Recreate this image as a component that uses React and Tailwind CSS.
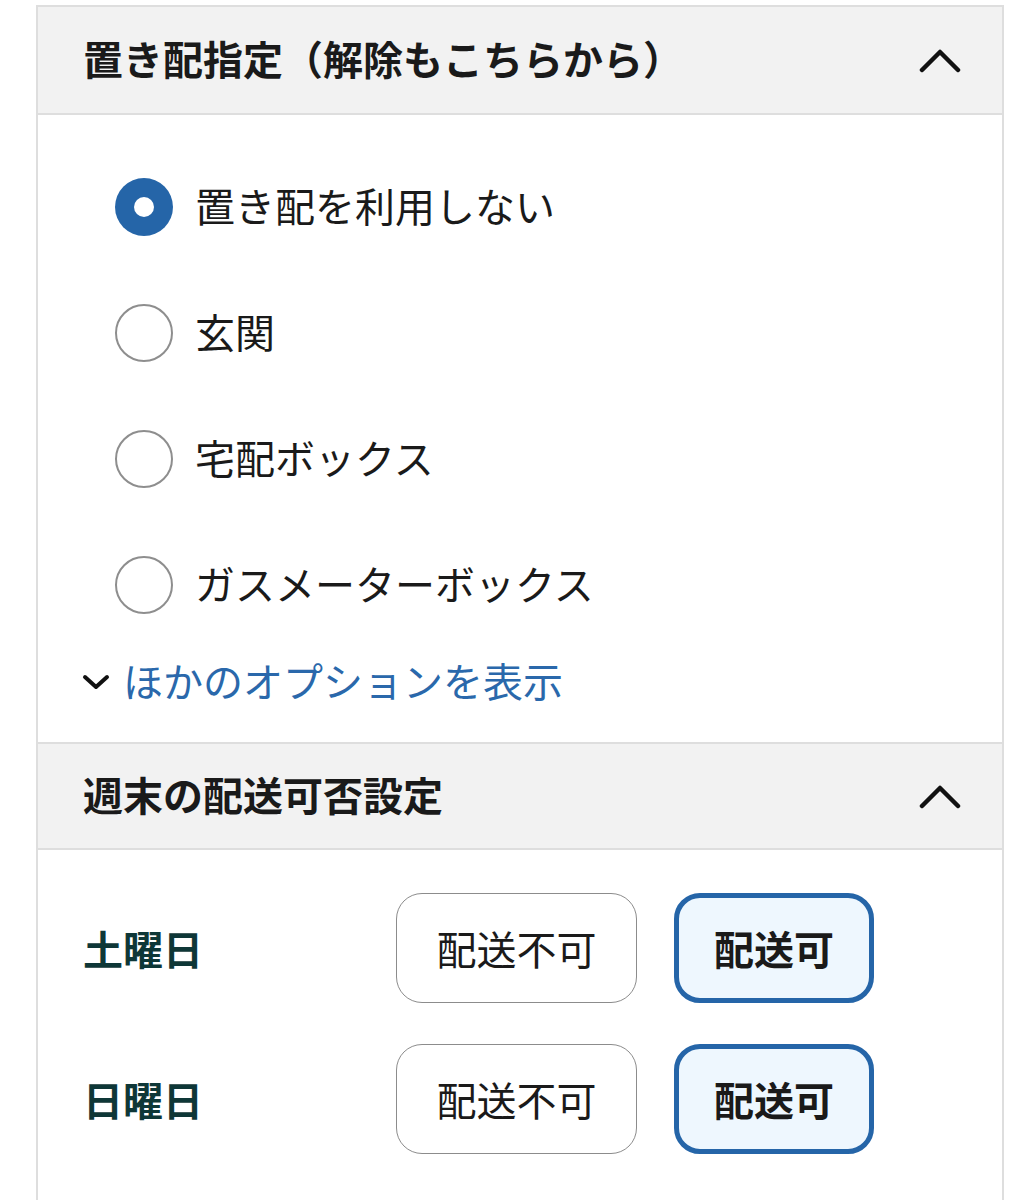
import { useState } from 'react'

const font = { fontFamily: '"Noto Sans CJK JP", "Noto Sans", sans-serif' }

function ChevronUp() {
  return (
    <svg width="42" height="26" viewBox="0 0 42 26" fill="none">
      <path d="M3 23 L21 5 L39 23" stroke="#111" strokeWidth="4.5" strokeLinecap="round" strokeLinejoin="round" />
    </svg>
  )
}

function ChevronDown() {
  return (
    <svg width="28" height="18" viewBox="0 0 28 18" fill="none">
      <path d="M3 4 L14 14 L25 4" stroke="#111" strokeWidth="4" strokeLinecap="round" strokeLinejoin="round" />
    </svg>
  )
}

function SectionHeader({ title, first }) {
  return (
    <div className={`flex h-[108px] items-center justify-between border-b-2 border-[#dedede] bg-[#f2f2f2] pl-[45px] pr-[41px] ${first ? '' : 'border-t-2'}`}>
      <h2 className="-mt-[4px] text-[40px] font-bold leading-none text-[#1a1a1a]">{title}</h2>
      <ChevronUp />
    </div>
  )
}

function Radio({ checked, label, onClick }) {
  return (
    <button onClick={onClick} className="flex h-[58px] items-center gap-[22px] text-left">
      {checked ? (
        <span className="flex h-[58px] w-[58px] items-center justify-center rounded-full bg-[#2565a8]">
          <span className="h-[20px] w-[20px] rounded-full bg-white" />
        </span>
      ) : (
        <span className="h-[58px] w-[58px] rounded-full border-[2px] border-[#8e8e8e] bg-white" />
      )}
      <span className="-mt-[4px] text-[40px] leading-none text-[#1a1a1a]">{label}</span>
    </button>
  )
}

function DayRow({ day, value, onChange }) {
  return (
    <div className="flex items-center">
      <div className="w-[313px] text-[40px] font-bold leading-none text-[#0e3737]">{day}</div>
      <div className="flex gap-[37px]">
        <button
          onClick={() => onChange(false)}
          className={value === false
            ? 'flex h-[110px] w-[241px] items-center justify-center rounded-[26px] border-[5px] border-[#2565a8] bg-[#eef7fe] text-[40px] font-bold text-[#1a1a1a]'
            : 'flex h-[110px] w-[241px] items-center justify-center rounded-[26px] border-[1.5px] border-[#8c8c8c] bg-white text-[40px] text-[#1a1a1a]'}
        >
          配送不可
        </button>
        <button
          onClick={() => onChange(true)}
          className={value === true
            ? 'flex h-[110px] w-[200px] items-center justify-center rounded-[26px] border-[5px] border-[#2565a8] bg-[#eef7fe] text-[40px] font-bold text-[#1a1a1a]'
            : 'flex h-[110px] w-[200px] items-center justify-center rounded-[26px] border-[1.5px] border-[#8c8c8c] bg-white text-[40px] text-[#1a1a1a]'}
        >
          配送可
        </button>
      </div>
    </div>
  )
}

export default function App() {
  const [place, setPlace] = useState(0)
  const [sat, setSat] = useState(true)
  const [sun, setSun] = useState(true)
  const options = ['置き配を利用しない', '玄関', '宅配ボックス', 'ガスメーターボックス']

  return (
    <div className="min-h-[1200px] bg-white pl-[36px] pr-[7px] pt-[5px]" style={font}>
      <div className="min-h-[1195px] border-x-2 border-t-2 border-[#dedede]">
        <SectionHeader title="置き配指定（解除もこちらから）" first />
        <div className="flex flex-col pb-[30px] pl-[77px] pt-[63px]">
          <div className="flex flex-col gap-[68px]">
            {options.map((o, i) => (
              <Radio key={o} label={o} checked={place === i} onClick={() => setPlace(i)} />
            ))}
          </div>
          <button className="-ml-[33px] mt-[38px] flex h-[60px] items-center gap-[13px] text-left">
            <ChevronDown />
            <span className="-mt-[4px] text-[40px] leading-none text-[#2a68ab]">ほかのオプションを表示</span>
          </button>
        </div>
        <SectionHeader title="週末の配送可否設定" />
        <div className="flex flex-col gap-[41px] pl-[45px] pt-[43px]">
          <DayRow day="土曜日" value={sat} onChange={setSat} />
          <DayRow day="日曜日" value={sun} onChange={setSun} />
        </div>
      </div>
    </div>
  )
}
